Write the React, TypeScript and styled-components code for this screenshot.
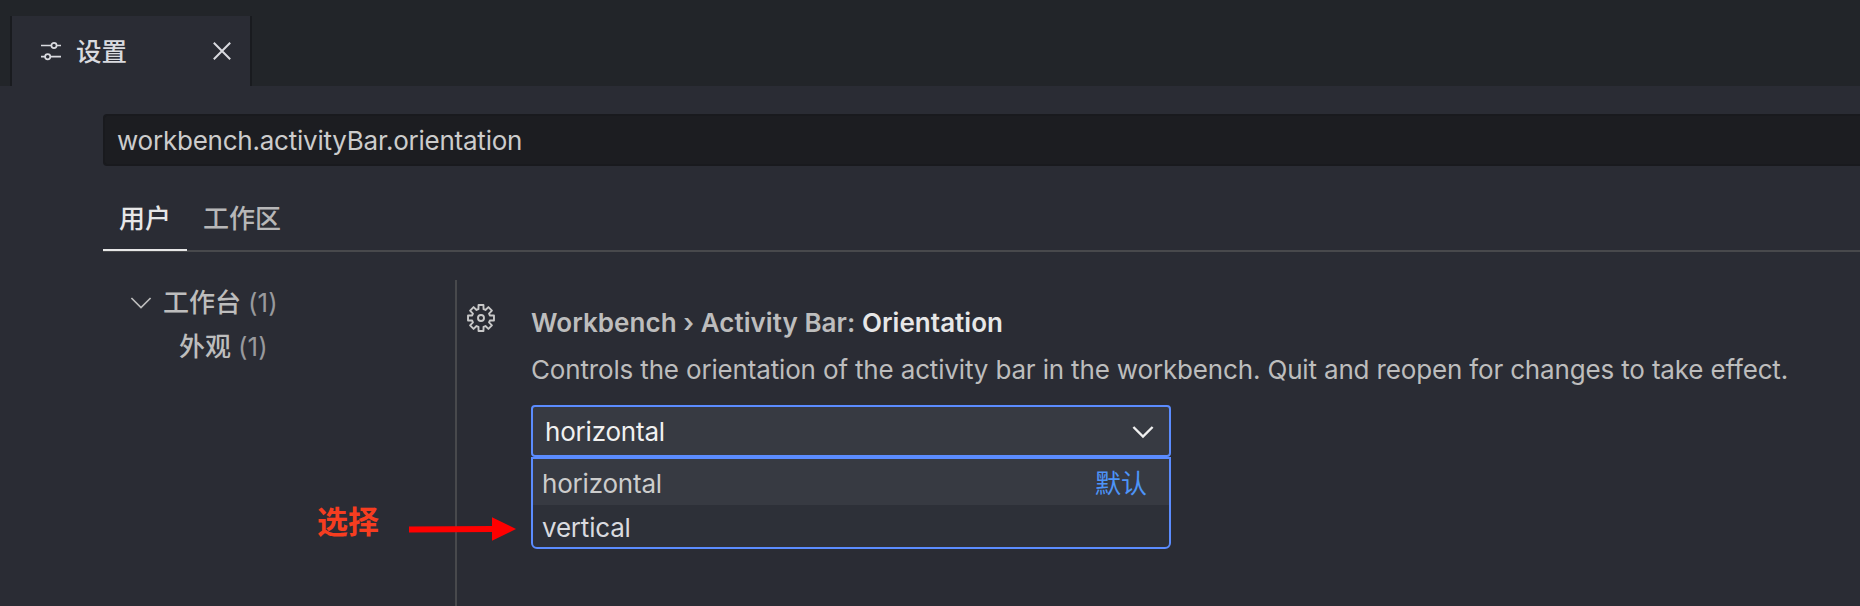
import React from "react";
import styled, { createGlobalStyle } from "styled-components";

const GlobalStyle = createGlobalStyle`
  * { box-sizing: border-box; }
  body {
    margin: 0;
    background: #2a2c34;
    color: #bdbdbd;
    font-family: Inter, "Noto Sans CJK SC", sans-serif;
    font-size: 26px;
    line-height: 44px;
    overflow: hidden;
  }
`;

const Window = styled.div`
  display: flex;
  flex-direction: column;
  width: 1860px;
  height: 606px;
  overflow: hidden;
  background: #2a2c34;
`;

const TabStrip = styled.header`
  display: flex;
  height: 86px;
  padding: 16px 0 0 10px;
  background: #222529;
`;

const EditorTab = styled.div`
  display: flex;
  align-items: center;
  width: 242px;
  height: 70px;
  padding: 0 18px 0 27px;
  border: solid #191b1f;
  border-width: 0 2px;
  background: #2a2c34;
  color: #d9dadf;
`;

const TabTitle = styled.span`
  flex: 1;
  margin-left: 13px;
  padding-top: 2px;
  font-weight: 500;
  font-size: 25.5px;
`;

const Icon = styled.svg`
  display: block;
  flex: none;
  fill: none;
  stroke: currentColor;
`;

const Text = styled.span<{ $spacing?: number }>`
  letter-spacing: ${(p) => p.$spacing ?? 0}px;
  white-space: pre;
`;

const Settings = styled.main`
  display: flex;
  flex: 1;
  flex-direction: column;
  padding: 28px 0 0 103px;
`;

const SearchBox = styled.div`
  display: flex;
  align-items: center;
  flex: none;
  height: 52px;
  padding: 2px 0 0 12px;
  border: 2px solid #191a1e;
  border-width: 2px 0 2px 2px;
  border-radius: 4px 0 0 4px;
  background: #1c1d21;
  color: #cccccc;
`;

const ScopeTabs = styled.nav`
  display: flex;
  flex: none;
  height: 86px;
  padding-top: 30px;
  border-bottom: 2px solid #48494c;
`;

const ScopeTab = styled.div<{ $active?: boolean }>`
  height: 55px;
  padding: 1px 16px 0 16px;
  border-bottom: 2px solid ${(p) => (p.$active ? "#e7e7e7" : "transparent")};
  color: ${(p) => (p.$active ? "#e7e7e7" : "#b7b7b8")};
  font-weight: 500;
`;

const Body = styled.div`
  display: flex;
  flex: 1;
  padding-top: 28px;
`;

const Tree = styled.aside`
  display: flex;
  flex-direction: column;
  width: 352px;
  padding-top: 1px;
`;

const TreeRow = styled.div<{ $indent: number }>`
  display: flex;
  align-items: center;
  height: 44px;
  padding-left: ${(p) => p.$indent}px;
`;

const TreeLabel = styled.span<{ $gap?: number }>`
  margin-left: ${(p) => p.$gap ?? 0}px;
  font-weight: 500;
`;

const Count = styled.span`
  margin-left: 7px;
  color: #98999c;
  letter-spacing: 0.1px;
`;

const Detail = styled.section`
  display: flex;
  flex: 1;
  border-left: 2px solid #48494c;
  padding: 21px 0 0 10px;
`;

const GearSlot = styled.div`
  width: 64px;
  padding-top: 3px;
  color: #c8c8c8;
`;

const Setting = styled.div`
  display: flex;
  flex-direction: column;
`;

const Title = styled.h3`
  margin: 0;
  font-size: 26px;
  font-weight: 600;
  line-height: 44px;
  letter-spacing: 0.05px;
  white-space: pre;
`;

const Key = styled.span`
  color: #e7e7e7;
`;

const Description = styled.p`
  margin: 3px 0 13px;
  line-height: 44px;
  letter-spacing: -0.16px;
  white-space: nowrap;
`;

const Select = styled.div`
  display: flex;
  align-items: center;
  justify-content: space-between;
  width: 640px;
  height: 52px;
  padding: 1px 15px 0 12px;
  border: 2px solid #5b8cff;
  border-radius: 4px;
  background: #373a42;
  color: #f0f0f0;
`;

const OptionList = styled.div`
  width: 640px;
  height: 92px;
  border: 2px solid #5b8cff;
  border-radius: 0 0 6px 6px;
  background: #2d3038;
`;

const Option = styled.div<{ $selected?: boolean }>`
  display: flex;
  align-items: center;
  justify-content: space-between;
  height: ${(p) => (p.$selected ? 46 : 42)}px;
  padding: 4px 22px 0 9px;
  background: ${(p) => (p.$selected ? "#373a42" : "transparent")};
  color: ${(p) => (p.$selected ? "#cccccc" : "#d9dadf")};
`;

const DefaultTag = styled.span`
  color: #4d94f8;
`;

const Annotation = styled.div`
  position: absolute;
  left: 317px;
  top: 500px;
  display: flex;
  align-items: center;
  gap: 30px;
  color: #f63d20;
  font-size: 31px;
  font-weight: 700;
`;

const Arrow = styled.svg`
  margin-top: 13px;
  fill: #ff0000;
`;

const Chevron = ({ width, color = "currentColor" }: { width: number; color?: string }) => (
  <Icon width="22" height="14" viewBox="0 0 22 14" stroke={color} strokeWidth={width} strokeLinejoin="miter">
    <path d="M1.4 2 11 11.500l9.600-9.500" />
  </Icon>
);

const Gear = () => {
  const points: string[] = [];
  for (let i = 0; i < 8; i += 1) {
    const pts = [[-16, 9.2], [-10.8, 13.2], [10.8, 13.2], [16, 9.2]];
    for (const [deg, r] of pts) {
      const a = ((i * 45 + deg - 90) * Math.PI) / 180;
      points.push(`${(14 + r * Math.cos(a)).toFixed(2)},${(14 + r * Math.sin(a)).toFixed(2)}`);
    }
  }
  return (
    <Icon width="28" height="28" viewBox="0 0 28 28" strokeWidth="1.9" strokeLinejoin="round">
      <polygon points={points.join(" ")} />
      <circle cx="14" cy="14" r="3" />
    </Icon>
  );
};

export default function App() {
  return (
    <Window>
      <GlobalStyle />
      <TabStrip>
        <EditorTab>
          <Icon width="24" height="20" viewBox="0 0 24 20" strokeWidth="1.7">
            <path d="M2 4.500h10.200M17.800 4.500H22M2 15.700h4M11.500 15.700H22" />
            <circle cx="15" cy="4.500" r="2.600" />
            <circle cx="8.700" cy="15.700" r="2.600" />
          </Icon>
          <TabTitle>设置</TabTitle>
          <Icon width="20" height="20" viewBox="0 0 20 20" strokeWidth="2">
            <path d="m1.800 1.800 16.400 16.400M18.200 1.800 1.800 18.200" />
          </Icon>
        </EditorTab>
      </TabStrip>
      <Settings>
        <SearchBox>
          <Text $spacing={-0.23}>workbench.activityBar.orientation</Text>
        </SearchBox>
        <ScopeTabs>
          <ScopeTab $active>用户</ScopeTab>
          <ScopeTab>工作区</ScopeTab>
        </ScopeTabs>
        <Body>
          <Tree>
            <TreeRow $indent={27}>
              <Chevron width={1.7} />
              <TreeLabel $gap={11}>工作台</TreeLabel>
              <Count>(1)</Count>
            </TreeRow>
            <TreeRow $indent={76}>
              <TreeLabel>外观</TreeLabel>
              <Count>(1)</Count>
            </TreeRow>
          </Tree>
          <Detail>
            <GearSlot>
              <Gear />
            </GearSlot>
            <Setting>
              <Title>
                Workbench › Activity Bar: <Key>Orientation</Key>
              </Title>
              <Description>
                Controls the orientation of the activity bar in the workbench. Quit and reopen for changes to take effect.
              </Description>
              <Select>
                <Text $spacing={-0.2}>horizontal</Text>
                <Chevron width={2.4} color="#d0d0d0" />
              </Select>
              <OptionList>
                <Option $selected>
                  <Text $spacing={-0.2}>horizontal</Text>
                  <DefaultTag>默认</DefaultTag>
                </Option>
                <Option>
                  <Text $spacing={-0.2}>vertical</Text>
                </Option>
              </OptionList>
            </Setting>
          </Detail>
        </Body>
      </Settings>
      <Annotation>
        选择
        <Arrow width="108" height="24" viewBox="0 0 108 24">
          <path d="M0 9.500 83 9V.200L107 12 83 23.800V15L0 15.500z" />
        </Arrow>
      </Annotation>
    </Window>
  );
}
